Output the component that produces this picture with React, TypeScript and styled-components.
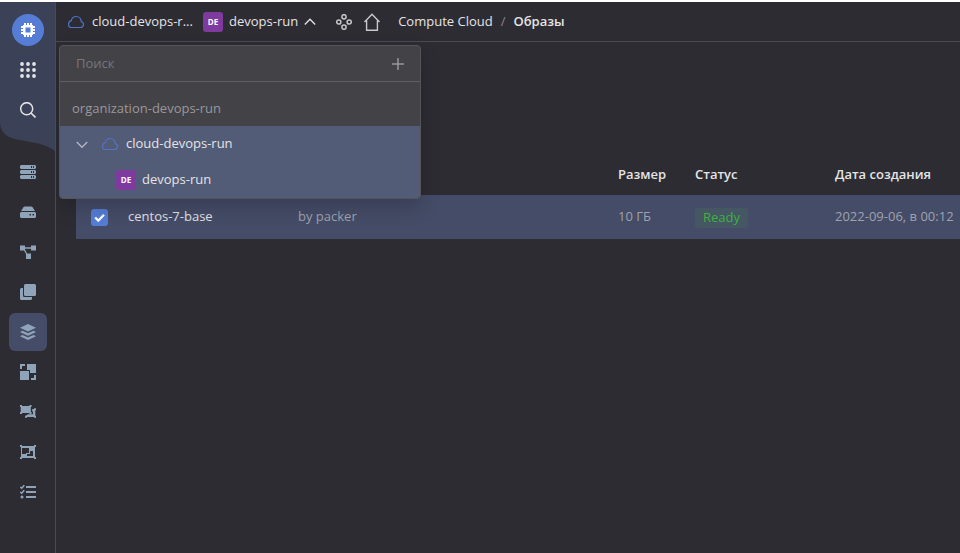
import React from "react";
import styled, { createGlobalStyle, css } from "styled-components";

const GlobalStyle = createGlobalStyle`
  *, *::before, *::after { box-sizing: border-box; }
  body {
    margin: 0;
    background: #2d2c33;
    color: #e4e4e6;
    font: 400 13px/20px "Open Sans", "Noto Sans", sans-serif;
  }
  button, input { font: inherit; color: inherit; }
`;

const Page = styled.div`
  display: grid;
  grid-template-columns: 56px minmax(0, 1fr);
  min-height: 100vh;
  border-top: 2px solid #fff;
`;

const Sidebar = styled.aside`
  border-right: 1px solid #4b4a50;
`;

const SidebarTop = styled.div`
  position: relative;
  display: flex;
  flex-direction: column;
  align-items: center;
  gap: 2px;
  padding: 9px 0 24px;
`;

const Wave = styled.svg`
  position: absolute;
  inset: 0;
  width: 100%;
  height: 100%;
`;

const IconButton = styled.button<{ $active?: boolean }>`
  position: relative;
  display: grid;
  place-items: center;
  width: 38px;
  height: 38px;
  padding: 0;
  border: 0;
  border-radius: 6px;
  color: inherit;
  background: ${(p) => (p.$active ? "#454c67" : "transparent")};
`;

const ServiceLogo = styled.span`
  display: grid;
  place-items: center;
  width: 32px;
  height: 32px;
  border-radius: 50%;
  background: #557dd6;
`;

const SideNav = styled.nav`
  display: flex;
  flex-direction: column;
  align-items: center;
  gap: 2px;
  color: #90a4b9;
`;

const Content = styled.div`
  min-width: 0;
  overflow: hidden;
`;

const Header = styled.header`
  position: relative;
  display: flex;
  align-items: center;
  height: 40px;
  padding: 0 12px;
  border-bottom: 1px solid #4b4a50;
  white-space: nowrap;
`;

const PlainButton = styled.button`
  display: flex;
  align-items: center;
  gap: 8px;
  padding: 0;
  border: 0;
  background: none;
`;

const Label = styled.span`
  padding-bottom: 2px;
`;

const CloudButton = styled(PlainButton)`
  width: 135px;
`;

const FolderButton = styled(PlainButton)`
  gap: 6px;
`;

const HeaderLinks = styled.div`
  display: flex;
  align-items: center;
  gap: 12px;
  margin-left: 20px;
`;

const IconLink = styled.a`
  display: flex;
  color: #c8c8ca;
`;

const Crumbs = styled.nav`
  display: flex;
  gap: 8px;
  margin-left: 18px;
  padding-bottom: 2px;
`;

const Crumb = styled.a<{ $current?: boolean }>`
  color: #e4e4e6;
  text-decoration: none;
  font-weight: ${(p) => (p.$current ? 600 : 400)};
`;

const Slash = styled.span`
  color: #88878c;
`;

const Badge = styled.span`
  display: grid;
  place-items: center;
  width: 20px;
  height: 20px;
  border-radius: 3px;
  background: #7f3aa0;
  color: #fff;
  font-size: 8px;
  font-weight: 700;
  line-height: 20px;
`;

const Popup = styled.section`
  position: absolute;
  z-index: 1;
  top: 43px;
  left: 3px;
  width: 362px;
  overflow: hidden;
  border: 1px solid #555459;
  border-radius: 4px;
  background: #434247;
  box-shadow: 0 8px 20px rgba(0, 0, 0, 0.2);
`;

const SearchRow = styled.div`
  display: flex;
  align-items: center;
  height: 36px;
  padding: 0 15px 0 16px;
  border-bottom: 1px solid #605f64;
`;

const SearchInput = styled.input`
  flex: 1;
  min-width: 0;
  padding: 0 0 2px;
  border: 0;
  outline: 0;
  background: none;
  &::placeholder { color: #77767b; opacity: 1; }
`;

const AddButton = styled(PlainButton)`
  color: #98979b;
`;

const Organization = styled.div`
  padding: 16px 12px 8px;
  color: #99989c;
`;

const Tree = styled.ul`
  margin: 0;
  padding: 0;
  list-style: none;
  background: #535c77;
`;

const TreeItem = styled.li<{ $nested?: boolean }>`
  display: flex;
  align-items: center;
  height: 36px;
  padding-left: ${(p) => (p.$nested ? "56px" : "16px")};
`;

const TreeToggle = styled(PlainButton)`
  margin-right: 14px;
  color: #b4b7c2;
`;

const TreeLabel = styled(PlainButton)<{ $tight?: boolean }>`
  gap: ${(p) => (p.$tight ? "6px" : "8px")};
  height: 100%;
`;

const Main = styled.main`
  padding: 111px 0 0 20px;
`;

const Table = styled.table`
  width: 100%;
  min-width: 884px;
  border-collapse: collapse;
  table-layout: fixed;
  text-align: left;
  white-space: nowrap;
`;

const cell = css`
  padding: 0;
`;

const Th = styled.th<{ $width?: number }>`
  ${cell}
  width: ${(p) => (p.$width ? `${p.$width}px` : "auto")};
  height: 42px;
  font-weight: 600;
`;

const Td = styled.td<{ $muted?: boolean; $text?: boolean }>`
  ${cell}
  height: 44px;
  padding-bottom: ${(p) => (p.$text ? "2px" : "0")};
  color: ${(p) => (p.$muted ? "#9fa2ae" : "#e0e1e6")};
`;

const Row = styled.tr`
  background: #454c67;
`;

const CheckLabel = styled.label`
  display: grid;
  width: 17px;
  height: 17px;
  margin-left: 15px;
  > * { grid-area: 1 / 1; }
  > svg { pointer-events: none; }
`;

const Checkbox = styled.input`
  appearance: none;
  width: 17px;
  height: 17px;
  margin: 0;
  border-radius: 3px;
  background: #557dd6;
`;

const Status = styled.span`
  display: inline-block;
  padding: 0 8px 2px;
  border-radius: 3px;
  background: #445763;
  color: #3fb13f;
  line-height: 18px;
`;

type IconProps = { size?: number; children: React.ReactNode };

const Line = ({ size = 16, children }: IconProps) => (
  <svg width={size} height={size} viewBox={`0 0 ${size} ${size}`} fill="none" stroke="currentColor" aria-hidden="true">
    {children}
  </svg>
);

const Solid = ({ size = 16, children }: IconProps) => (
  <svg width={size} height={size} viewBox={`0 0 ${size} ${size}`} fill="currentColor" aria-hidden="true">
    {children}
  </svg>
);

const CloudIcon = () => (
  <svg width="16" height="16" viewBox="0 0 16 16" fill="none" stroke="#4f74c4" strokeWidth="1.200" aria-hidden="true">
    <path d="M3.5 13.5h9a3 3 0 0 0 .7-5.9C13.2 4.7 11 2.500 8.200 2.500 5.700 2.500 3.700 4.300 3.300 6.700 1.700 7 .6 8.400.6 10.200c0 1.900 1.200 3.300 2.900 3.300Z" />
  </svg>
);

const ChipIcon = () => (
  <svg width="16" height="16" viewBox="0 0 16 16" aria-hidden="true">
    <path
      d="M4 1h2v2h1V1h2v2h1V1h2v2h1v1h2v2h-2v1h2v2h-2v1h2v2h-2v1h-1v2h-2v-2H9v2H7v-2H6v2H4v-2H3v-1H1v-2h2V9H1V7h2V6H1V4h2V3h1Z"
      fill="#fff"
    />
    <rect x="5.500" y="5.500" width="5" height="5" fill="#557dd6" />
  </svg>
);

const GridIcon = () => (
  <Solid>
    {[2, 8, 14].map((y) => [2, 8, 14].map((x) => <circle key={`${x}-${y}`} cx={x} cy={y} r="1.900" />))}
  </Solid>
);

const SearchIcon = () => (
  <Line>
    <circle cx="6.700" cy="6.700" r="6" strokeWidth="1.500" />
    <path d="m11 11 4.500 4.500" strokeWidth="1.600" />
  </Line>
);

const Chevron = ({ up }: { up?: boolean }) => (
  <Line size={12}>
    <path d={up ? "M.8 8.500 6 3.200l5.200 5.300" : "M.8 4 6 9.300 11.200 4"} strokeWidth="1.300" />
  </Line>
);

const ServicesIcon = () => (
  <Line>
    <g strokeWidth="1.500">
      <circle cx="8" cy="2.800" r="2.100" />
      <circle cx="2.800" cy="8" r="2.100" />
      <circle cx="13.200" cy="8" r="2.100" />
      <circle cx="8" cy="13.200" r="2.100" />
    </g>
  </Line>
);

const HomeIcon = () => (
  <svg width="16" height="18" viewBox="0 0 16 18" fill="none" stroke="currentColor" strokeWidth="1.400" aria-hidden="true">
    <path d="M.5 9 8 1.200 15.500 9M2.600 7.500v9.700h10.800V7.500" />
  </svg>
);

const PlusIcon = () => (
  <Line size={14}>
    <path d="M7 1v12M1 7h12" strokeWidth="1.500" />
  </Line>
);

const ServersIcon = () => (
  <Solid>
    <path
      fillRule="evenodd"
      d="M1 1h14l1 1v2l-1 1H1L0 4V2Zm10 1v2h1V2Zm2 0v2h1V2ZM1 6h14l1 1v2l-1 1H1L0 9V7Zm10 1v2h1V7Zm2 0v2h1V7ZM1 11h14l1 1v2l-1 1H1l-1-1v-2Zm10 1v2h1v-2Zm2 0v2h1v-2Z"
    />
  </Solid>
);

const DiskIcon = () => (
  <Solid>
    <path d="M1 7 3.500 3.200Q4 2.500 5 2.500h6q1 0 1.500.7L15 7Z" />
    <path fillRule="evenodd" d="M1 8h14l1 1v4l-1 1H1l-1-1V9Zm8.500 2v1.500H11V10Zm3 0v1.500H14V10Z" />
  </Solid>
);

const NetworkIcon = () => (
  <Solid>
    <path d="M0 1.500h5v1.800h6V1.500h5v5h-5V4.800H5v.7l2 4h4V15H6v-5L4 6.500H0Z" />
  </Solid>
);

const CopyIcon = () => (
  <Solid>
    <rect x="4" y="0" width="12" height="12" rx="1.500" />
    <path d="M0 5.500Q0 4 1.500 4H3v7.500Q3 13 4.500 13H12v1.500q0 1.500-1.500 1.500h-9Q0 16 0 14.500Z" />
  </Solid>
);

const LayersIcon = () => (
  <Solid>
    <path d="M8 0 16 3.700 8 7.500 0 3.700Z" />
    <path d="M0 8.100 2.500 6.800 8 9.200l5.500-2.400L16 8.100 8 11.800Z" />
    <path d="M0 12.300 2.500 11 8 13.400l5.500-2.400 2.500 1.300L8 16Z" />
  </Solid>
);

const ScaleIcon = () => (
  <Solid>
    <path d="M7 0h9v9h-6V6H7ZM0 7h9v9H0ZM0 0h5v2H2v3H0ZM14 11h2v5h-5v-2h3Z" />
  </Solid>
);

const GroupsIcon = () => (
  <Solid>
    <path d="M0 1h2v1h7.500V1h2v2h-.7v5h.7v2h-2V9H2v1H0V8h.7V3H0Z" />
    <path d="M12.200 5H14V4.300h2v2h-.7v5.400h.7v2h-2V13H7v.7H5v-2h.7l2.300-1.400h5V7.500h-.8Z" />
  </Solid>
);

const PlacementIcon = () => (
  <Solid>
    <path
      fillRule="evenodd"
      d="M0 1h2v1h12V1h2v2h-1v10h1v2h-2v-1H2v1H0v-2h1V3H0Zm2 3v6h4V9h3V4Zm8 3v3H7v2h6V7Z"
    />
  </Solid>
);

const ChecklistIcon = () => (
  <Solid>
    <path d="M6 2h10v2H6ZM6 7h10v2H6ZM6 12h10v2H6Z" />
    <circle cx="2" cy="13" r="1.500" />
    <path d="m.3 3 1.400 1.200 2.600-3M.3 8l1.400 1.200 2.600-3" fill="none" stroke="currentColor" strokeWidth="1.600" />
  </Solid>
);

const CheckMark = () => (
  <svg width="17" height="17" viewBox="0 0 17 17" fill="none" stroke="#fff" strokeWidth="2.200" aria-hidden="true">
    <path d="m4.200 8.500 3.100 3.100L13 5.800" />
  </svg>
);

const sections = [
  { label: "Виртуальные машины", icon: <ServersIcon /> },
  { label: "Диски", icon: <DiskIcon /> },
  { label: "Файловые хранилища", icon: <NetworkIcon /> },
  { label: "Снимки дисков", icon: <CopyIcon /> },
  { label: "Образы", icon: <LayersIcon />, active: true },
  { label: "Группы виртуальных машин", icon: <ScaleIcon /> },
  { label: "Группы размещения", icon: <GroupsIcon /> },
  { label: "Выделенные хосты", icon: <PlacementIcon /> },
  { label: "Операции", icon: <ChecklistIcon /> },
];

export default function App() {
  return (
    <>
      <GlobalStyle />
      <Page>
        <Sidebar>
          <SidebarTop>
            <Wave viewBox="0 0 55 151" preserveAspectRatio="none" aria-hidden="true">
              <path d="M0 0h55v149C50 145 44 143 38 141.500L15 137C6 135 0 129 0 121Z" fill="#3b4156" />
            </Wave>
            <IconButton aria-label="Compute Cloud">
              <ServiceLogo>
                <ChipIcon />
              </ServiceLogo>
            </IconButton>
            <IconButton aria-label="Все сервисы">
              <GridIcon />
            </IconButton>
            <IconButton aria-label="Поиск">
              <SearchIcon />
            </IconButton>
          </SidebarTop>
          <SideNav aria-label="Разделы">
            {sections.map((s) => (
              <IconButton key={s.label} aria-label={s.label} $active={s.active}>
                {s.icon}
              </IconButton>
            ))}
          </SideNav>
        </Sidebar>

        <Content>
          <Header>
            <CloudButton title="cloud-devops-run">
              <CloudIcon />
              <Label>cloud-devops-r...</Label>
            </CloudButton>
            <FolderButton aria-expanded="true">
              <Badge>DE</Badge>
              <Label>devops-run</Label>
              <Chevron up />
            </FolderButton>
            <HeaderLinks>
              <IconLink href="#services" aria-label="Сервисы">
                <ServicesIcon />
              </IconLink>
              <IconLink href="#home" aria-label="Главная">
                <HomeIcon />
              </IconLink>
            </HeaderLinks>
            <Crumbs aria-label="Навигация">
              <Crumb href="#compute">Compute Cloud</Crumb>
              <Slash>/</Slash>
              <Crumb href="#images" aria-current="page" $current>
                Образы
              </Crumb>
            </Crumbs>

            <Popup aria-label="Выбор каталога">
              <SearchRow>
                <SearchInput type="text" placeholder="Поиск" aria-label="Поиск" />
                <AddButton aria-label="Создать">
                  <PlusIcon />
                </AddButton>
              </SearchRow>
              <Organization>organization-devops-run</Organization>
              <Tree>
                <TreeItem>
                  <TreeToggle aria-label="Свернуть" aria-expanded="true">
                    <Chevron />
                  </TreeToggle>
                  <TreeLabel>
                    <CloudIcon />
                    <Label>cloud-devops-run</Label>
                  </TreeLabel>
                </TreeItem>
                <TreeItem $nested>
                  <TreeLabel $tight>
                    <Badge>DE</Badge>
                    <Label>devops-run</Label>
                  </TreeLabel>
                </TreeItem>
              </Tree>
            </Popup>
          </Header>

          <Main>
            <Table>
              <thead>
                <tr>
                  <Th $width={52} aria-label="Выбор" />
                  <Th $width={170} aria-label="Имя" />
                  <Th $width={320} aria-label="Описание" />
                  <Th $width={77}>Размер</Th>
                  <Th $width={140}>Статус</Th>
                  <Th>Дата создания</Th>
                </tr>
              </thead>
              <tbody>
                <Row>
                  <Td>
                    <CheckLabel>
                      <Checkbox type="checkbox" defaultChecked aria-label="centos-7-base" />
                      <CheckMark />
                    </CheckLabel>
                  </Td>
                  <Td $text>centos-7-base</Td>
                  <Td $text $muted>by packer</Td>
                  <Td $text $muted>10 ГБ</Td>
                  <Td>
                    <Status>Ready</Status>
                  </Td>
                  <Td $text $muted>2022-09-06, в 00:12</Td>
                </Row>
              </tbody>
            </Table>
          </Main>
        </Content>
      </Page>
    </>
  );
}
